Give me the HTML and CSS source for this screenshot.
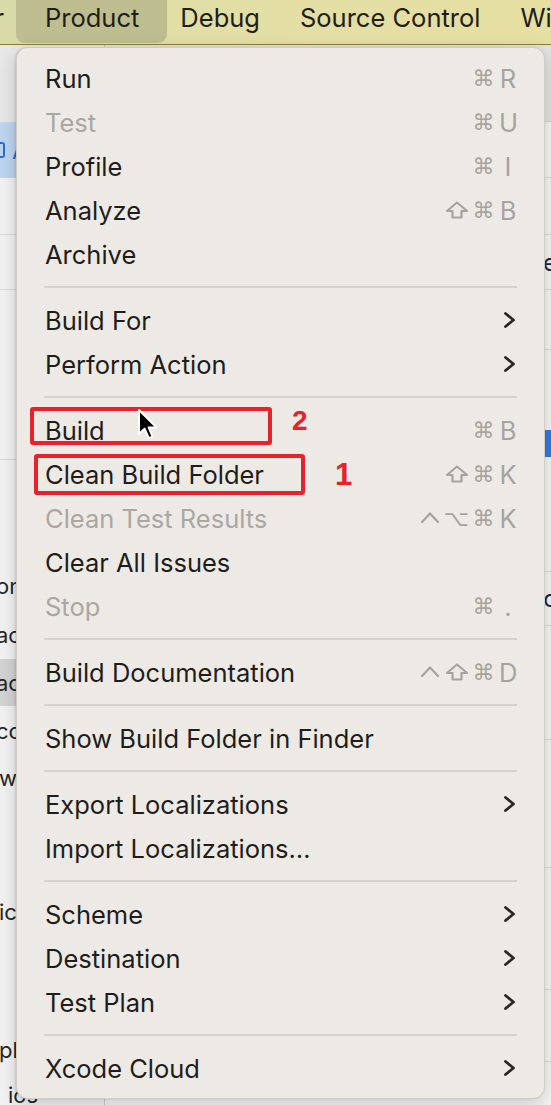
FILE: index.html
```html
<!DOCTYPE html>
<html lang="en">
<head>
<meta charset="utf-8">
<title>Xcode Product menu</title>
<link rel="stylesheet" href="styles.css">
</head>
<body>
<div class="screen">
  <header class="menubar">
    <div class="mb-cut"><span>Editor</span></div>
    <div class="mb-item active">Product</div>
    <div class="mb-item">Debug</div>
    <div class="mb-item">Source Control</div>
    <div class="mb-item">Window</div>
  </header>

  <div class="workspace">
    <aside class="sidebar">
      <div class="sb-top"></div>
      <div class="sb-sel"><span class="sb-icon"></span><span class="sb-a">A</span></div>
      <div class="blk h57 ruled"></div>
      <div class="blk h55 ruled"></div>
      <div class="blk h170 ruled"></div>
      <div class="blk h102"></div>
      <div class="sb-row h48">on,</div>
      <div class="sb-row h49">ac</div>
      <div class="sb-row h47 picked">ac</div>
      <div class="sb-row h49">cc</div>
      <div class="sb-row h46 flush">w_</div>
      <div class="blk h88"></div>
      <div class="sb-row h46 flush">ic</div>
      <div class="blk h92"></div>
      <div class="sb-row h46 flush">pl</div>
      <div class="sb-row h46 indent">ios</div>
    </aside>

    <section class="editor">
      <div class="ed-top"></div>
      <div class="blk h56 ruled"></div>
      <div class="blk h57 ruled"></div>
      <div class="ed-row h55 ruled"><span>e</span></div>
      <div class="blk h60 ruled"></div>
      <div class="blk h80"></div>
      <div class="ed-row h27"><span class="ed-blue"></span></div>
      <div class="blk h115 ruled"></div>
      <div class="ed-row h54 ruled"><span>c</span></div>
      <div class="blk h114 ruled"></div>
      <div class="blk h128 ruled"></div>
      <div class="blk h122 ruled"></div>
      <div class="blk h72 ruled"></div>
    </section>
  </div>

  <nav class="menu">
    <div class="item"><span class="label">Run</span><span class="sc"><span class="mod">⌘</span><span class="key">R</span></span></div>
    <div class="item off"><span class="label">Test</span><span class="sc"><span class="mod">⌘</span><span class="key">U</span></span></div>
    <div class="item"><span class="label">Profile</span><span class="sc"><span class="mod">⌘</span><span class="key">I</span></span></div>
    <div class="item"><span class="label">Analyze</span><span class="sc"><span class="mod" aria-label="Shift"><svg class="ico" viewBox="0 0 24 18"><path d="M12 1.5 L22 10 L16.5 10 L16.5 16.5 L7.5 16.5 L7.5 10 L2 10 Z"/></svg></span><span class="mod">⌘</span><span class="key">B</span></span></div>
    <div class="item"><span class="label">Archive</span></div>
    <div class="sep"></div>
    <div class="item"><span class="label">Build For</span><svg class="chev" viewBox="0 0 14 18"><path d="M2.5 2.5 L10.5 9 L2.5 15.5"/></svg></div>
    <div class="item"><span class="label">Perform Action</span><svg class="chev" viewBox="0 0 14 18"><path d="M2.5 2.5 L10.5 9 L2.5 15.5"/></svg></div>
    <div class="sep"></div>
    <div class="item"><span class="label">Build</span><span class="sc"><span class="mod">⌘</span><span class="key">B</span></span></div>
    <div class="item"><span class="label">Clean Build Folder</span><span class="sc"><span class="mod" aria-label="Shift"><svg class="ico" viewBox="0 0 24 18"><path d="M12 1.5 L22 10 L16.5 10 L16.5 16.5 L7.5 16.5 L7.5 10 L2 10 Z"/></svg></span><span class="mod">⌘</span><span class="key">K</span></span></div>
    <div class="item off"><span class="label">Clean Test Results</span><span class="sc"><span class="mod" aria-label="Control"><svg class="ico" viewBox="0 0 24 18"><path d="M4 13 L12 4.5 L20 13"/></svg></span><span class="mod">⌥</span><span class="mod">⌘</span><span class="key">K</span></span></div>
    <div class="item"><span class="label">Clear All Issues</span></div>
    <div class="item off"><span class="label">Stop</span><span class="sc"><span class="mod">⌘</span><span class="key">.</span></span></div>
    <div class="sep"></div>
    <div class="item"><span class="label">Build Documentation</span><span class="sc"><span class="mod" aria-label="Control"><svg class="ico" viewBox="0 0 24 18"><path d="M4 13 L12 4.5 L20 13"/></svg></span><span class="mod" aria-label="Shift"><svg class="ico" viewBox="0 0 24 18"><path d="M12 1.5 L22 10 L16.5 10 L16.5 16.5 L7.5 16.5 L7.5 10 L2 10 Z"/></svg></span><span class="mod">⌘</span><span class="key">D</span></span></div>
    <div class="sep"></div>
    <div class="item"><span class="label">Show Build Folder in Finder</span></div>
    <div class="sep"></div>
    <div class="item"><span class="label">Export Localizations</span><svg class="chev" viewBox="0 0 14 18"><path d="M2.5 2.5 L10.5 9 L2.5 15.5"/></svg></div>
    <div class="item"><span class="label">Import Localizations…</span></div>
    <div class="sep"></div>
    <div class="item"><span class="label">Scheme</span><svg class="chev" viewBox="0 0 14 18"><path d="M2.5 2.5 L10.5 9 L2.5 15.5"/></svg></div>
    <div class="item"><span class="label">Destination</span><svg class="chev" viewBox="0 0 14 18"><path d="M2.5 2.5 L10.5 9 L2.5 15.5"/></svg></div>
    <div class="item"><span class="label">Test Plan</span><svg class="chev" viewBox="0 0 14 18"><path d="M2.5 2.5 L10.5 9 L2.5 15.5"/></svg></div>
    <div class="sep"></div>
    <div class="item"><span class="label">Xcode Cloud</span><svg class="chev" viewBox="0 0 14 18"><path d="M2.5 2.5 L10.5 9 L2.5 15.5"/></svg></div>
  </nav>

  <div class="mark mark-build"></div>
  <div class="mark mark-clean"></div>
  <span class="num num-2">2</span>
  <span class="num num-1">1</span>

  <svg class="cursor" width="24" height="34" viewBox="0 0 24 34">
    <path d="M2 2 L2 26 L7.6 20.6 L11.8 30.2 L15.6 28.6 L11.6 19.4 L19.4 19.4 Z" fill="#000" stroke="#fff" stroke-width="2" stroke-linejoin="round"/>
  </svg>
</div>
</body>
</html>
```

FILE: styles.css
```css
* {
  box-sizing: border-box;
  margin: 0;
  padding: 0;
}

html,
body {
  width: 551px;
  height: 1105px;
  overflow: hidden;
}

body {
  font-family: Inter, "Noto Sans", sans-serif;
  background: #f4f4f4;
}

.screen {
  position: relative;
  width: 551px;
  height: 1105px;
  display: flex;
  flex-direction: column;
  overflow: hidden;
}

/* ---------- menu bar ---------- */
.menubar {
  flex: none;
  height: 45px;
  display: flex;
  align-items: flex-start;
  background: linear-gradient(90deg, #d8daa9 0%, #e1dea6 30%, #e6dfa2 100%);
  border-bottom: 1px solid #8e7e33;
  font-size: 25.5px;
  color: #1f1d16;
  white-space: nowrap;
}

.mb-cut {
  flex: none;
  width: 24px;
  height: 44px;
  padding-right: 20px;
  padding-bottom: 9px;
  display: flex;
  align-items: center;
  justify-content: flex-end;
  overflow: hidden;
}

.mb-cut span {
  flex: none;
}

.mb-item {
  flex: none;
  height: 44px;
  padding: 0 20px 9px;
  display: flex;
  align-items: center;
}

.mb-item.active {
  height: 43px;
  margin: 0 -7px 0 -8px;
  padding: 0 28px 9px 29px;
  background: #bebd8f;
  border-radius: 0 0 9px 9px;
}

/* ---------- background workspace ---------- */
.workspace {
  flex: 1;
  display: grid;
  grid-template-columns: 105px 1fr;
  min-height: 0;
}

.sidebar {
  display: flex;
  flex-direction: column;
  background: #f3f3f3;
  border-right: 1px solid #c9c9c9;
  overflow: hidden;
  font-size: 22px;
  color: #262626;
}

.sb-top {
  flex: none;
  height: 77px;
  background: #e8e8e8;
}

.sb-sel {
  flex: none;
  height: 56px;
  background: #bed6f1;
  display: flex;
  align-items: center;
  gap: 7px;
}

.sb-icon {
  width: 5px;
  height: 16px;
  border: 2px solid #2a6fd6;
  border-left: none;
  border-radius: 0 3px 3px 0;
}

.sb-a {
  color: #2a6fd6;
  font-size: 24px;
}

.blk,
.sb-row,
.ed-row {
  flex: none;
}

.ruled {
  border-bottom: 1px solid #dadada;
}

.sb-row {
  display: flex;
  align-items: center;
  white-space: nowrap;
  text-indent: -4px;
}

.sb-row.flush {
  text-indent: -1px;
}

.sb-row.picked {
  background: #d4d4d4;
}

.sb-row.indent {
  padding-left: 8px;
  text-indent: 0;
  align-items: flex-start;
  padding-top: 9px;
}

.h27 { height: 27px; }
.h46 { height: 46px; }
.h47 { height: 47px; }
.h48 { height: 48px; }
.h49 { height: 49px; }
.h54 { height: 54px; }
.h55 { height: 55px; }
.h56 { height: 56px; }
.h57 { height: 57px; }
.h60 { height: 60px; }
.h72 { height: 72px; }
.h80 { height: 80px; }
.h88 { height: 88px; }
.h92 { height: 92px; }
.h102 { height: 102px; }
.h114 { height: 114px; }
.h115 { height: 115px; }
.h122 { height: 122px; }
.h128 { height: 128px; }
.h170 { height: 170px; }

.editor {
  display: flex;
  flex-direction: column;
  background: #f6f6f6;
  overflow: hidden;
  font-size: 24px;
  color: #262626;
}

.ed-top {
  flex: none;
  height: 77px;
  background: #e2e2e2;
  border-bottom: 1px solid #d2d2d2;
}

.ed-row {
  display: flex;
  align-items: center;
  justify-content: flex-end;
  margin-right: -6px;
}

.ed-blue {
  width: 12px;
  height: 27px;
  background: #2f7be0;
}

/* ---------- dropdown menu (overlay) ---------- */
.menu {
  position: absolute;
  left: 16px;
  top: 47px;
  width: 529px;
  padding: 8px 0 8px;
  background: #edeae5;
  border: 1px solid rgba(0, 0, 0, 0.12);
  border-radius: 12px;
  box-shadow: 0 6px 20px rgba(0, 0, 0, 0.18), -1px 0 2px rgba(0, 0, 0, 0.12);
  font-size: 25.5px;
  color: #1f1d1b;
}

.item {
  height: 44px;
  display: flex;
  align-items: center;
  padding: 0 27px 0 28px;
  white-space: nowrap;
}

.item.off .label {
  color: #aaa7a3;
}

.sc {
  margin-left: auto;
  display: flex;
  align-items: center;
  color: #a6a39f;
}

.mod {
  width: 27px;
  height: 24px;
  display: flex;
  align-items: center;
  justify-content: center;
  font-family: "DejaVu Sans", sans-serif;
  font-size: 22px;
}

.ico {
  width: 24px;
  height: 18px;
  fill: none;
  stroke: #a6a39f;
  stroke-width: 2.2;
  stroke-linecap: round;
  stroke-linejoin: round;
}

.key {
  width: 18px;
  margin-left: 2px;
  text-align: center;
}

.chev {
  margin-left: auto;
  width: 14px;
  height: 18px;
  fill: none;
  stroke: #2a2826;
  stroke-width: 2.8;
  stroke-linecap: round;
  stroke-linejoin: round;
}

.sep {
  height: 2px;
  margin: 10px 27px 10px 27px;
  background: #d5d1cb;
}

/* ---------- annotations (overlay) ---------- */
.mark {
  position: absolute;
  border: 4px solid #e8212b;
  border-radius: 3px;
}

.mark-build {
  left: 30px;
  top: 407px;
  width: 242px;
  height: 38px;
}

.mark-clean {
  left: 34px;
  top: 454px;
  width: 271px;
  height: 41px;
}

.num {
  position: absolute;
  font-family: "Liberation Sans", Arial, sans-serif;
  font-weight: bold;
  color: #e8212b;
  line-height: 1;
}

.num-2 {
  left: 292px;
  top: 407px;
  font-size: 28px;
}

.num-1 {
  left: 335px;
  top: 459px;
  font-size: 31px;
}

.cursor {
  position: absolute;
  left: 137px;
  top: 408px;
}
```
